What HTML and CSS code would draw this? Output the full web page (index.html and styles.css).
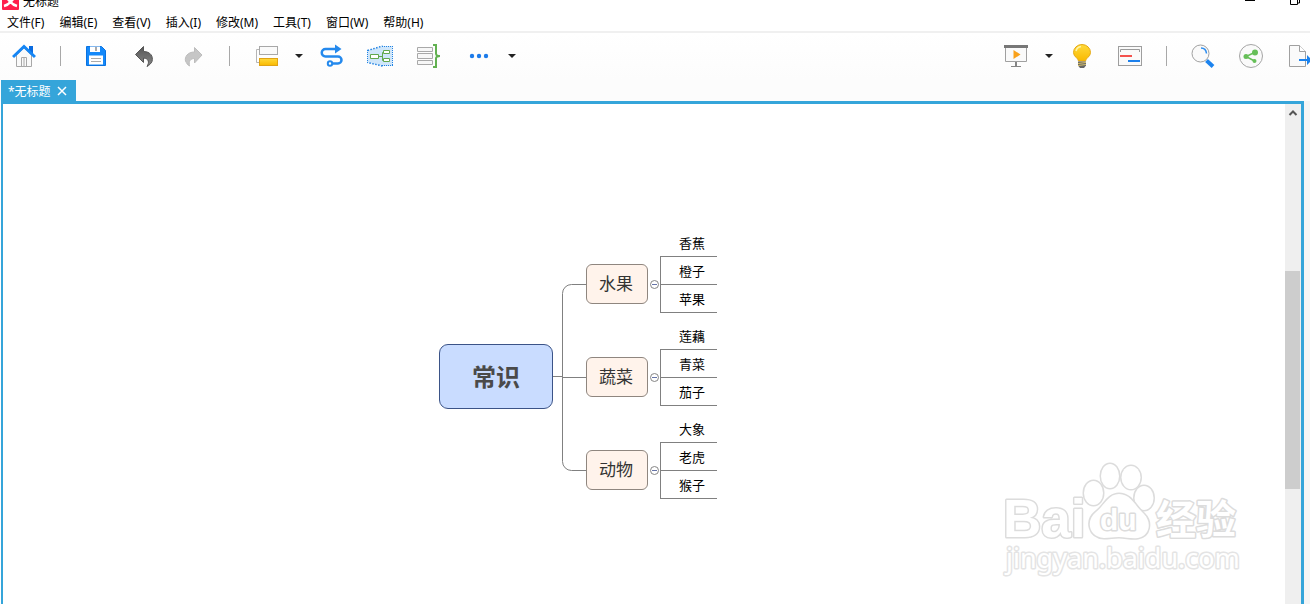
FILE: index.html
```html
<!DOCTYPE html>
<html lang="zh-CN">
<head>
  <meta charset="UTF-8">
  <meta name="viewport" content="width=device-width, initial-scale=1.0">
  <title>无标题</title>
  <link rel="stylesheet" href="styles.css">
</head>
<body>
  <header class="titlebar">
    <svg class="app-logo" width="17" height="16" viewBox="0 0 17 16">
      <rect width="17" height="16" rx="1" fill="#ff1f4b"/>
      <path d="M2 12 Q6 11 8.500 8 Q11 11 15 12 M5 4 L8.500 8 L12 4" fill="none" stroke="#fff" stroke-width="2.600"/>
    </svg>
    <span class="window-title">无标题</span>
    <div class="window-buttons">
      <button type="button" aria-label="最小化">
        <svg width="12" height="16" viewBox="0 0 12 16"><path d="M1 7.500h10" stroke="#000"/></svg>
      </button>
      <button type="button" aria-label="还原">
        <svg width="12" height="16" viewBox="0 0 12 16"><path d="M1.500 4.500h7v7h-7z M3.500 4v-2h7v8h-2" fill="none" stroke="#000"/></svg>
      </button>
    </div>
  </header>

  <nav class="menubar">
    <button type="button">文件(F)</button>
    <button type="button">编辑(E)</button>
    <button type="button">查看(V)</button>
    <button type="button">插入(I)</button>
    <button type="button">修改(M)</button>
    <button type="button">工具(T)</button>
    <button type="button">窗口(W)</button>
    <button type="button">帮助(H)</button>
  </nav>

  <div class="toolbar">
    <div class="tools">
      <button type="button" aria-label="主页">
        <svg width="24" height="24" viewBox="0 0 24 24">
          <path d="M4.500 11v11.500h15V11L12 4z" fill="#fafafa" stroke="#a8a8a8"/>
          <path d="M9.500 22v-8.500h5V22M12 14v8" fill="none" stroke="#a8a8a8"/>
          <path d="M17 2h4v7h-4z" fill="#0a6be0"/>
          <path d="M1 13L12 2.500 23 13" fill="none" stroke="#1586f5" stroke-width="3"/>
        </svg>
      </button>
      <span class="separator"></span>
      <button type="button" aria-label="保存">
        <svg width="24" height="24" viewBox="0 0 24 24">
          <path d="M1.500 2.500h15l4 4v15h-19z" fill="#1489fa" stroke="#0a72e0"/>
          <path d="M5 2.500h10V8H5z" fill="#fff"/>
          <path d="M10 3h2v4h-2z" fill="#aaa"/>
          <path d="M4 11.500h14v9H4z" fill="#fff"/>
          <path d="M6 14.500h10M6 17.500h10" stroke="#aaa"/>
        </svg>
      </button>
      <button type="button" aria-label="撤销">
        <svg width="24" height="24" viewBox="0 0 24 24">
          <defs>
            <linearGradient id="dark" x2="0" y2="1"><stop stop-color="#555"/><stop offset="1" stop-color="#888"/></linearGradient>
          </defs>
          <path d="M10.500 2.500v5c7 0 10 5 8.500 10-1 2-3 4-5 5 2.500-4 2-8-3.500-8.500v4.500L2.500 10.500z" fill="url(#dark)" stroke="#555"/>
        </svg>
      </button>
      <button type="button" aria-label="重做">
        <svg width="24" height="24" viewBox="0 0 24 24">
          <path d="M13.500 3.500v4.500c-7 0-10 5-9 9 1 2 2 4 4 5-1-5 1-7.500 5-7.500v4.500L21 11z" fill="#c6c6c6" stroke="#bdbdbd"/>
        </svg>
      </button>
      <span class="separator"></span>
      <div class="split">
        <button type="button" aria-label="主题">
          <svg width="24" height="24" viewBox="0 0 24 24">
            <defs>
              <linearGradient id="gold" x2="0" y2="1"><stop stop-color="#ffda3b"/><stop offset="1" stop-color="#f9b900"/></linearGradient>
            </defs>
            <path d="M5 5.500H2.500v13H5" fill="none" stroke="#b5b5b5"/>
            <rect x="5.500" y="2.500" width="18" height="8" fill="#fafafa" stroke="#a8a8a8"/>
            <rect x="5.500" y="14.500" width="18" height="7" fill="url(#gold)" stroke="#e0a314"/>
          </svg>
        </button>
        <button type="button" class="caret" aria-label="更多主题"></button>
      </div>
      <button type="button" aria-label="联系">
        <svg width="24" height="24" viewBox="0 0 24 24">
          <path d="M16 5H5.500a3.500 3.500 0 0 0 0 7.500H18a3.500 3.500 0 0 1 0 7h-6" fill="none" stroke="#2489ed" stroke-width="2.500"/>
          <path d="M15 .5l6.500 4.500L15 9.500z" fill="#2489ed"/>
          <circle cx="10" cy="19.500" r="2.200" fill="#fff" stroke="#2489ed" stroke-width="2"/>
        </svg>
      </button>
      <button type="button" aria-label="外框">
        <svg width="26" height="24" viewBox="0 0 26 24">
          <path d="M.5 6.500l15-4.500h10v20h-10L.5 18.500z" fill="#cfe6fa"/>
          <path d="M.5 6.500l15-4.500M15.500 22L.5 18.500" fill="none" stroke="#2182e2" stroke-width="1.500" stroke-dasharray="1.500 1.500"/>
          <path d="M15 2.500h11M15 21.500h11M.5 6v13M25.500 2v20" fill="none" stroke="#2182e2" stroke-dasharray="1 1"/>
          <path d="M11.500 12.500h3.500M19 8.500h-3.500v8H19" fill="none" stroke="#62a84e"/>
          <path d="M3.500 10.500h8v4h-8zM16.500 6.500h6v3h-6zM16.500 14.500h6v3h-6z" fill="#fff" stroke="#62a84e"/>
        </svg>
      </button>
      <button type="button" aria-label="概要">
        <svg width="24" height="24" viewBox="0 0 24 24">
          <path d="M1.500 3.500h15v4h-15zM1.500 9.500h15v5h-15zM1.500 16.500h15v4h-15z" fill="#f7f7f7" stroke="#a8a8a8"/>
          <path d="M17 1h3v8.500q0 2.500 4 2.500-4 0-4 2.500V23h-3" fill="none" stroke="#62b151" stroke-width="2"/>
        </svg>
      </button>
      <div class="split split-more">
        <button type="button" aria-label="更多">
          <svg width="24" height="24" viewBox="0 0 24 24" fill="#1c7bea"><circle cx="5" cy="12" r="2.200"/><circle cx="12" cy="12" r="2.200"/><circle cx="19" cy="12" r="2.200"/></svg>
        </button>
        <button type="button" class="caret" aria-label="更多工具"></button>
      </div>
    </div>

    <div class="tools tools-right">
      <div class="split">
        <button type="button" aria-label="演示">
          <svg width="24" height="24" viewBox="0 0 24 24">
            <path d="M1.500 3.500h21v14h-21z" fill="#fafafa" stroke="#a0a0a0"/>
            <path d="M0 1h24v3H0z" fill="#777"/>
            <path d="M9.500 6l7 4.500-7 4.500z" fill="#f9a11b"/>
            <path d="M11 18h2v4h-2zM7 22h10v1H7z" fill="#858585"/>
          </svg>
        </button>
        <button type="button" class="caret" aria-label="更多演示"></button>
      </div>
      <button type="button" aria-label="头脑风暴">
        <svg width="24" height="24" viewBox="0 0 24 24">
          <path d="M8.500 17C8.500 14 3.500 13 3.500 8.500a8.500 8 0 0 1 17 0C20.500 13 15.500 14 15.500 17z" fill="url(#gold)" stroke="#e5aa16"/>
          <path d="M6 7q1-4 5-4.500" fill="none" stroke="#fff3a6" stroke-width="1.500"/>
          <path d="M8 17.500h8v4l-2 2.500h-4l-2-2.500z" fill="#666"/>
          <path d="M8 19.500l8-1M8 21.500l8-1" stroke="#d9c26a"/>
        </svg>
      </button>
      <button type="button" aria-label="甘特图">
        <svg width="24" height="24" viewBox="0 0 24 24">
          <rect x=".5" y="2.500" width="23" height="19" fill="#fafafa" stroke="#9e9e9e"/>
          <path d="M2.500 8V5.500h19V8" fill="none" stroke="#9a9a9a"/>
          <path d="M2 11h12v2H2z" fill="#f4524d"/>
          <path d="M10 16h12v2H10z" fill="#1c80ec"/>
        </svg>
      </button>
      <span class="separator"></span>
      <button type="button" aria-label="搜索">
        <svg width="24" height="24" viewBox="0 0 24 24">
          <path d="M15.500 16.500l6.500 6" stroke="#1c83ee" stroke-width="4"/>
          <circle cx="9.500" cy="9.500" r="8.500" fill="#fafafa" stroke="#a0a0a0"/>
          <path d="M10 4q5 0 5.500 5.500" fill="none" stroke="#2c8df0" stroke-width="1.500"/>
        </svg>
      </button>
      <button type="button" aria-label="分享">
        <svg width="24" height="24" viewBox="0 0 24 24">
          <circle cx="12" cy="12" r="11.500" fill="#fafafa" stroke="#a5a5a5"/>
          <path d="M15.500 8.500L7 12.500l8.500 4.500" fill="none" stroke="#66bf58" stroke-width="1.500"/>
          <g fill="#66bf58"><circle cx="16" cy="8.500" r="3"/><circle cx="7" cy="12.500" r="2.500"/><circle cx="15.500" cy="17" r="2"/></g>
        </svg>
      </button>
      <button type="button" aria-label="导出">
        <svg width="24" height="24" viewBox="0 0 24 24">
          <path d="M2.500 1.500h10l6 6v15h-16z" fill="#fafafa" stroke="#a0a0a0"/>
          <path d="M12.500 1.500v6h6" fill="#fff" stroke="#a0a0a0"/>
          <path d="M12 15h8v-4l5 5-5 5v-4h-8z" fill="#1c83ee"/>
        </svg>
      </button>
    </div>
  </div>

  <div class="tabs">
    <div class="tab">
      <span>*无标题</span>
      <button type="button" aria-label="关闭">
        <svg width="10" height="10" viewBox="0 0 10 10"><path d="M1 1l8 8M9 1L1 9" stroke="#fff" stroke-width="1.500"/></svg>
      </button>
    </div>
  </div>

  <main class="editor">
    <div class="canvas">
      <div class="mindmap">
        <div class="root-topic">常识</div>
        <svg class="connector" width="33" height="270" viewBox="0 0 33 270">
          <path d="M0 147.500h9.500M9.500 148.500H33M33 55.500H18.500a9 9 0 0 0-9 9v168a9 9 0 0 0 9 9H33" fill="none" stroke="#808080"/>
        </svg>
        <div class="branches">
          <section class="branch">
            <div class="topic">水果</div>
            <button type="button" class="toggle" aria-label="收起"></button>
            <ul class="leaves"><li>香蕉</li><li>橙子</li><li>苹果</li></ul>
          </section>
          <section class="branch">
            <div class="topic">蔬菜</div>
            <button type="button" class="toggle" aria-label="收起"></button>
            <ul class="leaves"><li>莲藕</li><li>青菜</li><li>茄子</li></ul>
          </section>
          <section class="branch">
            <div class="topic">动物</div>
            <button type="button" class="toggle" aria-label="收起"></button>
            <ul class="leaves"><li>大象</li><li>老虎</li><li>猴子</li></ul>
          </section>
        </div>
      </div>

      <svg class="watermark" width="244" height="124" viewBox="0 0 244 124">
        <g class="mark">
          <text class="mark-bai" x="4" y="78">Bai</text>
          <ellipse cx="94.500" cy="34" rx="9.500" ry="12"/>
          <ellipse cx="111" cy="17" rx="9" ry="12"/>
          <ellipse cx="132" cy="18.500" rx="9.500" ry="11.500"/>
          <ellipse cx="145" cy="39" rx="9.500" ry="12"/>
          <path d="M120 35c-11 0-15 12-23 18-11 9-7 25 8 26 6 0 9-1 15-1 7 0 12 2 19 1 12-2 14-16 6-24-9-8-13-20-25-20z"/>
          <text class="mark-du" x="101" y="71">du</text>
          <text class="mark-cn" x="157" y="75">经验</text>
          <text class="mark-url" x="7" y="109">jingyan.baidu.com</text>
        </g>
      </svg>
    </div>
    <div class="scrollbar">
      <button type="button" aria-label="向上滚动">
        <svg width="10" height="8" viewBox="0 0 10 8"><path d="M1.500 6L5 2.500 8.500 6" fill="none" stroke="#555" stroke-width="2"/></svg>
      </button>
      <div class="track"><div class="thumb"></div></div>
    </div>
  </main>
</body>
</html>
```
FILE: styles.css
```css
* {
  box-sizing: border-box;
}

body {
  margin: 0;
  height: 100vh;
  display: flex;
  flex-direction: column;
  overflow: hidden;
  background: #fff;
  color: #000;
  font-family: "Noto Sans", "Noto Sans CJK SC", sans-serif;
  font-size: 12px;
}

button {
  display: flex;
  align-items: center;
  justify-content: center;
  padding: 0;
  border: 0;
  background: none;
  color: inherit;
  font: inherit;
}

svg {
  display: block;
  flex: none;
}

.titlebar {
  display: flex;
  align-items: flex-end;
  gap: 4px;
  height: 12px;
  padding: 0 9px 2px 2px;
  overflow: hidden;
}

.window-title {
  line-height: 16px;
}

.window-buttons {
  display: flex;
  gap: 33px;
  margin-left: auto;
}

.window-buttons svg {
  margin-bottom: 1px;
}

.menubar {
  display: flex;
  gap: 15px;
  padding: 2px 7px 0;
  border-bottom: 2px solid #f0f0f0;
}

.menubar button {
  height: 17px;
  line-height: 17px;
}

/* Toolbar */
.toolbar {
  display: flex;
  justify-content: space-between;
  height: 47px;
  padding: 0 0 2px 12px;
  overflow: hidden;
  background: linear-gradient(#fff, #fcfcfc);
}

.tools {
  display: flex;
  align-items: center;
  gap: 24px;
}

.tools button {
  width: 24px;
  height: 24px;
}

.tools-right {
  margin-right: -1px;
}

.separator {
  width: 1px;
  height: 20px;
  background: #a8a8a8;
}

.split {
  display: flex;
  align-items: center;
  gap: 17px;
  margin-right: -7px;
}

.split-more {
  margin-left: 3px;
}

.tools .caret {
  width: 8px;
}

.caret::before {
  content: "";
  border: 4px solid transparent;
  border-top-color: #222;
  border-bottom: 0;
}

/* Tabs */
.tabs {
  display: flex;
  padding-left: 1px;
  background: #fcfcfc;
}

.tab {
  display: flex;
  align-items: center;
  gap: 6px;
  height: 21px;
  padding: 0 9px 0 7px;
  background: #35a5da;
  color: #fff;
}

/* Editor */
.editor {
  flex: 1;
  display: flex;
  margin-left: 1px;
  border: solid #35a5da;
  border-width: 3px 3px 0 2px;
  margin-right: 6px;
  box-shadow: 6px 0 #f5f5f5;
}

.canvas {
  flex: 1;
  position: relative;
  overflow: hidden;
}

.mindmap {
  position: absolute;
  left: 436px;
  top: 125px;
  display: flex;
  align-items: flex-start;
}

.root-topic {
  width: 114px;
  height: 65px;
  margin-top: 115px;
  border: 1px solid #3b5387;
  border-radius: 9px;
  background: #c9dcff;
  color: #4a4a4a;
  font-size: 24px;
  font-weight: bold;
  line-height: 63px;
  text-align: center;
}

.branches {
  display: flex;
  flex-direction: column;
  gap: 9px;
}

.branch {
  display: flex;
  align-items: flex-start;
}

.topic {
  width: 62px;
  height: 40px;
  margin-top: 35px;
  padding-left: 12px;
  border: 1px solid #8f867f;
  border-radius: 6px;
  background: #fff3eb;
  color: #333;
  font-size: 17px;
  line-height: 38px;
}

.toggle {
  width: 9px;
  height: 9px;
  margin: 51px 1px 0 2px;
  border: 1px solid #858585;
  border-radius: 50%;
}

.toggle::before {
  content: "";
  width: 5px;
  height: 1px;
  background: #6674a8;
}

.leaves {
  margin: 0;
  padding: 0;
  list-style: none;
}

.leaves li {
  width: 57px;
  height: 28px;
  padding-left: 19px;
  border-bottom: 1px solid #808080;
  font-size: 13px;
  line-height: 29px;
}

.leaves li + li {
  padding-left: 18px;
  border-left: 1px solid #808080;
}

/* Watermark */
.watermark {
  position: absolute;
  right: 42px;
  bottom: 21px;
}

.mark {
  fill: #fff;
  stroke: #dcdcdc;
  stroke-width: 3px;
  stroke-linejoin: round;
  font-weight: bold;
  paint-order: stroke;
}

.mark-bai {
  font-family: "Liberation Sans", sans-serif;
  font-size: 53px;
}

.mark-du {
  font-family: "Liberation Sans", sans-serif;
  font-size: 30px;
}

.mark-cn {
  font-size: 40px;
}

.mark-url {
  font-size: 27px;
  font-weight: normal;
  stroke: #e4e4e4;
}

/* Scrollbar */
.scrollbar {
  display: flex;
  flex-direction: column;
  width: 16px;
  background: #efefef;
}

.scrollbar button {
  height: 17px;
}

.track {
  flex: 1;
  padding: 150px 1px 0 0;
}

.thumb {
  height: 218px;
  background: #cdcdcd;
}
```
